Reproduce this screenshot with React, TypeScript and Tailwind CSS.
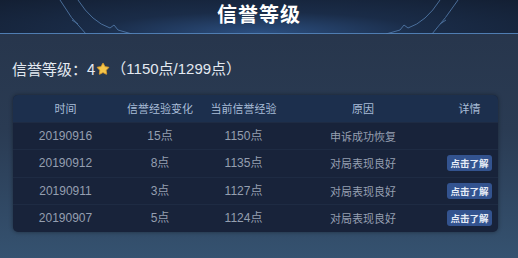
import { Star } from "lucide-react";

const rows = [
  { date: "20190916", change: "15点", total: "1150点", reason: "申诉成功恢复", detail: false },
  { date: "20190912", change: "8点", total: "1135点", reason: "对局表现良好", detail: true },
  { date: "20190911", change: "3点", total: "1127点", reason: "对局表现良好", detail: true },
  { date: "20190907", change: "5点", total: "1124点", reason: "对局表现良好", detail: true },
];

const cols = "grid grid-cols-[105px_84px_83px_156px_57px]";

function HeaderArcs() {
  return (
    <svg className="pointer-events-none absolute inset-0" width="518" height="34" viewBox="0 0 518 34" fill="none">
      <g stroke="#5b86b8" strokeWidth="1" opacity="0.75">
        <path d="M60 0 Q70 18 86 34" />
        <path d="M72 20 L78 24" />
        <path d="M78 0 Q92 22 110 28 L114 25 L118 30 L132 34" />
        <path d="M458 0 Q446 18 432 34" />
        <path d="M446 20 L440 24" />
        <path d="M440 0 Q426 22 408 28 L404 25 L400 30 L386 34" />
      </g>
    </svg>
  );
}

export default function App() {
  return (
    <div className="flex h-[258px] w-[518px] flex-col overflow-hidden bg-gradient-to-b from-[#26344a] via-[#2a3b53] to-[#355270] font-['Noto_Sans_CJK_SC',sans-serif]">
      <div className="relative flex h-[34px] shrink-0 items-center justify-center border-b border-[#4f7db2] pb-[5px] bg-[radial-gradient(ellipse_at_50%_100%,#2c4f80_0%,#1a2c48_45%,#131f33_100%)]">
        <HeaderArcs />
        <span className="relative text-[20px] font-bold tracking-[1px] text-white">信誉等级</span>
      </div>

      <div className="flex items-center px-3 pt-[24px] text-[15px] text-[#e3e9f1]">
        <span>信誉等级：4</span>
        <Star className="mx-[1px] h-[14px] w-[14px] fill-[#f6c64a] text-[#d89a2a]" strokeWidth={1.5} />
        <span className="font-['Liberation_Sans','Noto_Sans_CJK_SC',sans-serif]">（1150点/1299点）</span>
      </div>

      <div className="mx-[13px] mt-[14px] w-[485px] overflow-hidden rounded-[5px] bg-[#18233a] shadow-[0_0_4px_rgba(0,0,0,0.4)]">
        <div className={`${cols} h-[27px] items-center bg-[#1c2f4d] text-center text-[11px] text-[#a9bdd8]`}>
          <span>时间</span>
          <span>信誉经验变化</span>
          <span>当前信誉经验</span>
          <span>原因</span>
          <span>详情</span>
        </div>
        {rows.map((r) => (
          <div
            key={r.date}
            className={`${cols} h-[27.5px] items-center border-t border-[#1e2b43] text-center text-[12px] text-[#959fb0]`}
          >
            <span className="font-['Liberation_Sans',sans-serif]">{r.date}</span>
            <span className="font-['Liberation_Sans','Noto_Sans_CJK_SC',sans-serif]">{r.change}</span>
            <span className="font-['Liberation_Sans','Noto_Sans_CJK_SC',sans-serif]">{r.total}</span>
            <span className="text-[11px]">{r.reason}</span>
            <span className="flex justify-center">
              {r.detail && (
                <span className="flex h-[16px] w-[45px] items-center justify-center rounded-[3px] bg-[#33538f] text-[9.5px] font-bold text-[#e6ecf7]">
                  点击了解
                </span>
              )}
            </span>
          </div>
        ))}
      </div>
    </div>
  );
}
